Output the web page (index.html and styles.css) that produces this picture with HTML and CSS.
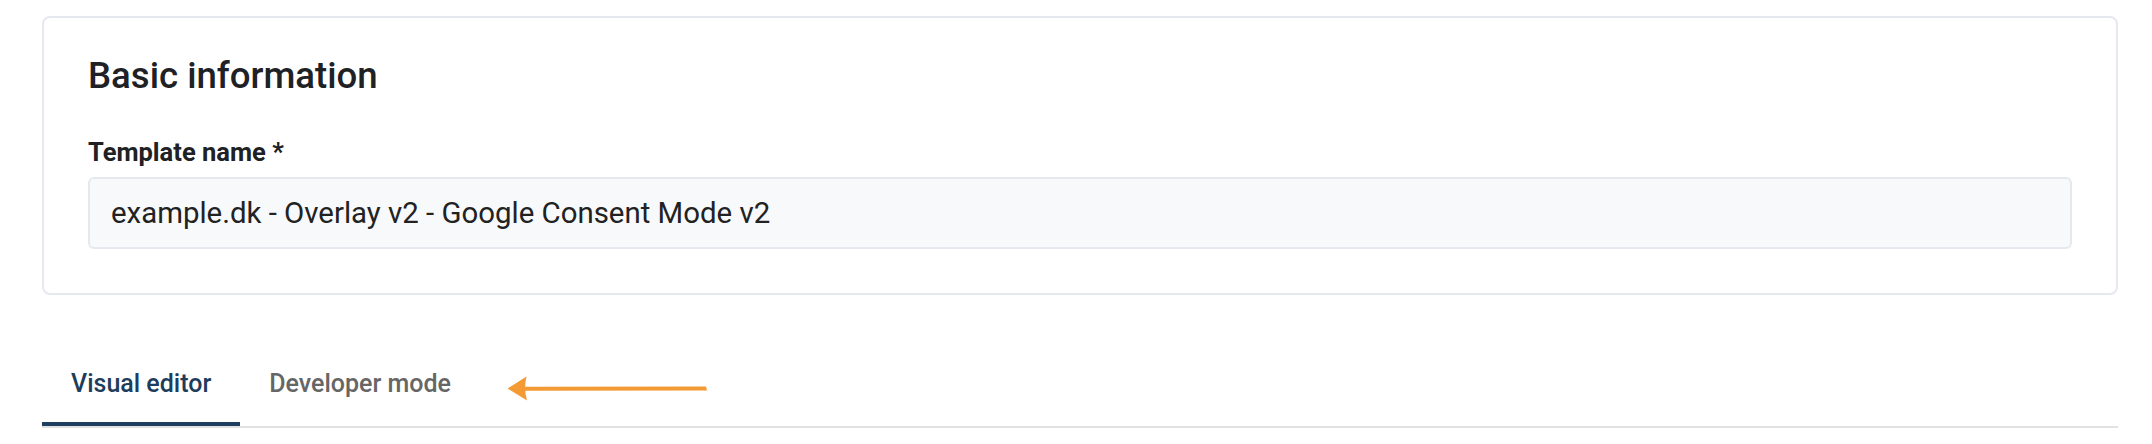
FILE: index.html
```html
<!DOCTYPE html>
<html lang="en">
<head>
<meta charset="utf-8">
<title>Template</title>
<link rel="stylesheet" href="styles.css">
</head>
<body>
<div class="page">
  <section class="card">
    <h2 class="card-title">Basic information</h2>
    <label class="field-label" for="tpl">Template name *</label>
    <div class="input" id="tpl">example.dk - Overlay v2 - Google Consent Mode v2</div>
  </section>
  <nav class="tabs">
    <div class="tab active">Visual editor</div>
    <div class="tab">Developer mode</div>
    <svg class="annot-arrow" width="204" height="28" viewBox="0 0 204 28" aria-hidden="true">
      <path d="M18 11.8 L199 11.4 L200 15.4 L18 15.8 Z" fill="#f39a35"/>
      <path d="M0.5 13.5 L19.5 1.5 Q16.5 13.5 20 25.5 Z" fill="#f39a35"/>
    </svg>
  </nav>
</div>
</body>
</html>
```
FILE: styles.css
```css
* { box-sizing: border-box; }
html, body { margin: 0; padding: 0; background: #ffffff; }
body {
  font-family: Roboto, "Noto Sans", "Liberation Sans", sans-serif;
  color: #222222;
}
.page {
  padding: 16px 34px 0 42px;
}
.card {
  border: 2px solid #e6e8ef;
  border-radius: 8px;
  padding: 37px 44px 44px 44px;
  background: #ffffff;
}
.card-title {
  margin: 0;
  font-size: 36.6px;
  line-height: 42px;
  font-weight: 500;
  color: #202124;
}
.field-label {
  display: block;
  margin-top: 40px;
  font-size: 25.5px;
  line-height: 30px;
  font-weight: 700;
  color: #202124;
}
.input {
  margin-top: 10px;
  height: 72px;
  display: flex;
  align-items: center;
  padding: 0 21px;
  background: #f8f9fb;
  border: 2px solid #e6e8ef;
  border-radius: 6px;
  font-size: 29.4px;
  color: #222222;
}
.tabs {
  position: relative;
  display: flex;
  margin-top: 49px;
  border-bottom: 2px solid #e2e2e2;
}
.tab {
  padding: 25px 29px 23px 29px;
  border-bottom: 4px solid transparent;
  font-size: 25px;
  line-height: 30px;
  font-weight: 500;
  color: #666666;
}
.tab.active {
  color: #1e3d5c;
  border-bottom-color: #1f3f60;
}
.annot-arrow {
  position: absolute;
  left: 465px;
  top: 31px;
}
```
